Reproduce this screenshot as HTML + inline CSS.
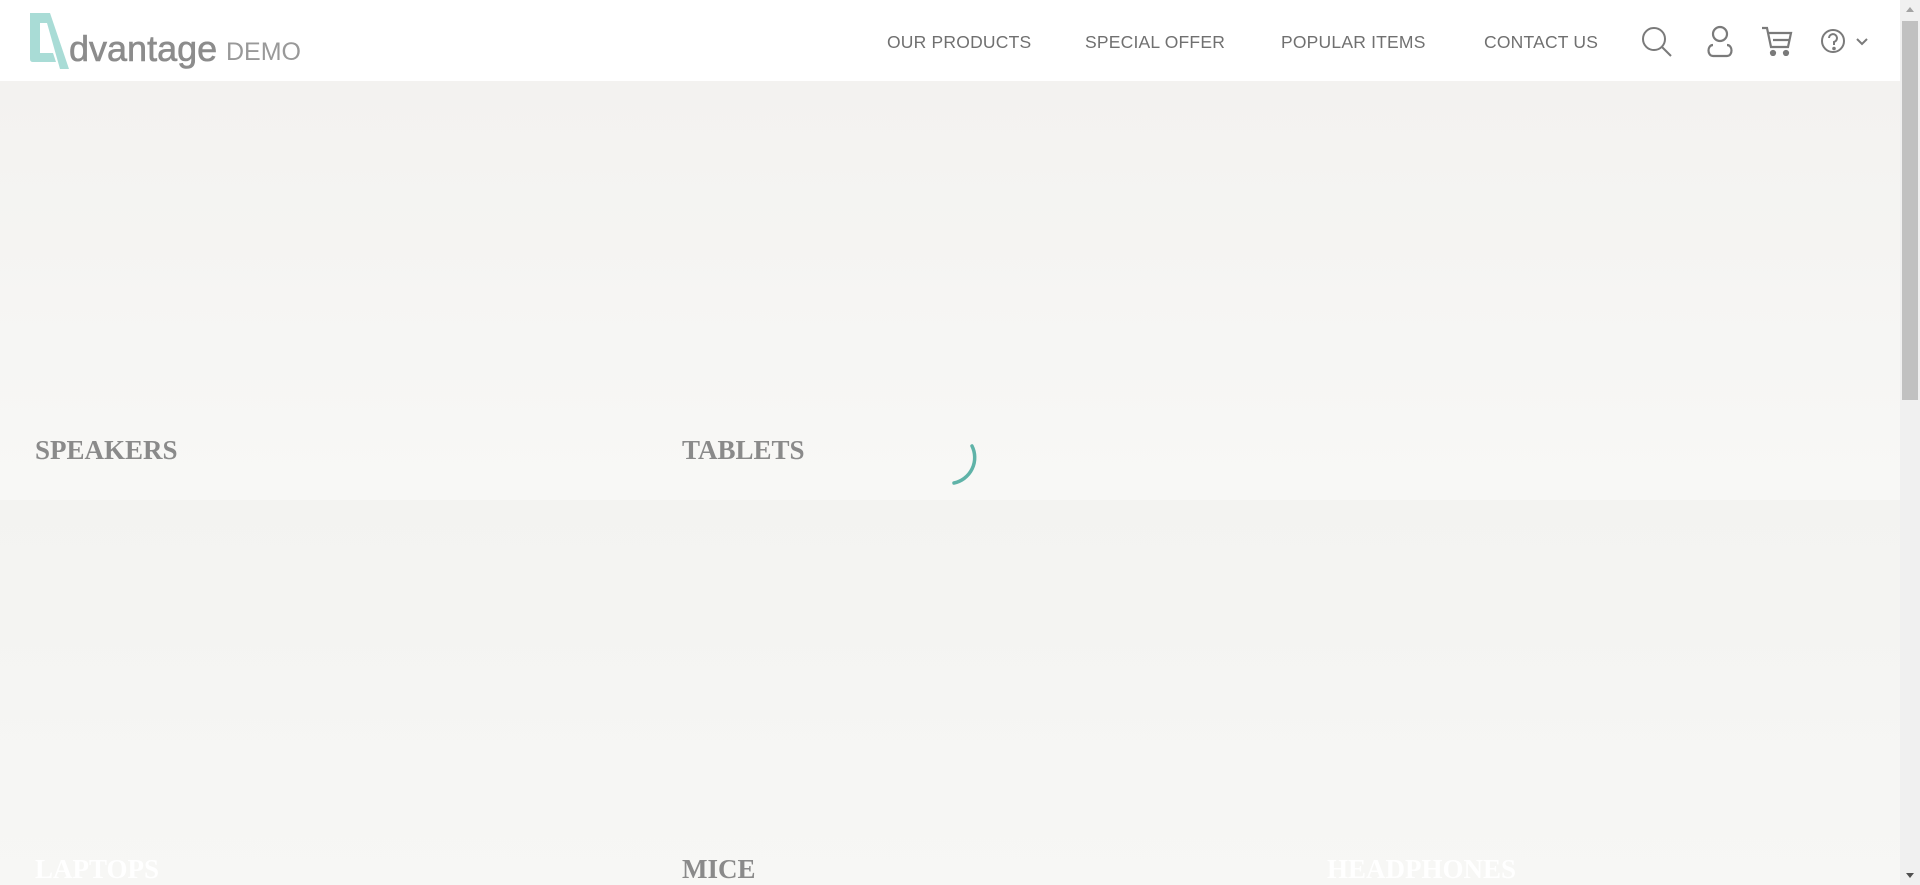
<!DOCTYPE html>
<html><head><meta charset="utf-8"><style>
*{margin:0;padding:0;box-sizing:border-box}
body{width:1920px;height:885px;overflow:hidden;background:#f6f5f3;font-family:"Liberation Sans",sans-serif;position:relative}
header{position:absolute;left:0;top:0;width:1900px;height:81px;background:#fff}
.logo{position:absolute;left:30px;top:13px}
.dv{position:absolute;left:69px;top:28px;font-size:36px;color:#8c8c8c;-webkit-text-stroke:0.6px #8c8c8c}
.demo{position:absolute;left:226px;top:38px;font-size:25px;color:#999}
nav a{position:absolute;top:32px;font-size:17.5px;color:#707070;text-decoration:none;letter-spacing:.2px}
.s1{position:absolute;left:0;top:81px;width:1900px;height:419px;background:linear-gradient(#f3f2f0,#f8f8f6)}
.s2{position:absolute;left:0;top:500px;width:1900px;height:385px;background:linear-gradient(#f3f3f1,#f7f7f5)}
.lab{position:absolute;font-family:"Liberation Serif",serif;font-weight:bold;font-size:27px;color:#8a8a8a}
.sb{position:absolute;left:1900px;top:0;width:20px;height:885px;background:#f0f0f0}
.th{position:absolute;left:2px;top:21px;width:16px;height:379px;background:#c1c1c1}
.ar{position:absolute;left:6px;top:7px;width:0;height:0;border-left:4px solid transparent;border-right:4px solid transparent;border-bottom:5px solid #a3a3a3}
.ar2{position:absolute;left:6px;bottom:7px;width:0;height:0;border-left:4px solid transparent;border-right:4px solid transparent;border-top:5px solid #505050}
</style></head><body>
<header>
<svg class="logo" width="39" height="56" viewBox="0 0 39 56"><path d="M0 0H20L39 56H30L17 10H10V40H23L26 49H3Q0 49 0 46Z" fill="#a9dcd6"/></svg>
<div class="dv">dvantage</div><div class="demo">DEMO</div>
<nav><a style="left:887px">OUR PRODUCTS</a><a style="left:1085px">SPECIAL OFFER</a><a style="left:1281px">POPULAR ITEMS</a><a style="left:1484px">CONTACT US</a></nav>
<svg style="position:absolute;left:1640px;top:25px" width="34" height="34" viewBox="0 0 34 34" fill="none" stroke="#7a7a7a" stroke-width="2"><circle cx="14" cy="14" r="11"/><path d="M22 22l9 9"/></svg>
<svg style="position:absolute;left:1705px;top:25px" width="30" height="34" viewBox="0 0 30 34" fill="none" stroke="#7a7a7a" stroke-width="2.2"><circle cx="15" cy="9" r="7"/><path d="M8 20c-6 0-6 11 0 11h14c6 0 6-11 0-11"/></svg>
<svg style="position:absolute;left:1761px;top:26px" width="34" height="30" viewBox="0 0 34 30" fill="#7a7a7a" stroke="#7a7a7a" stroke-width="2.2"><path fill="none" d="M1 2h5l4 19h17l3-14H8M12 14h16"/><circle cx="12" cy="27" r="2"/><circle cx="25" cy="27" r="2"/></svg>
<svg style="position:absolute;left:1820px;top:28px" width="50" height="26" viewBox="0 0 50 26" fill="none" stroke="#7a7a7a" stroke-width="2"><circle cx="13" cy="13" r="11"/><path d="M9 10a4 4 0 1 1 5 4v3" /><circle cx="14" cy="20.5" r=".8" fill="#7a7a7a"/><path d="M37 11l5 5 5-5"/></svg>
</header>
<div class="s1"></div><div class="s2"></div>
<div class="lab" style="left:35px;top:435px">SPEAKERS</div>
<div class="lab" style="left:682px;top:435px">TABLETS</div>
<div class="lab" style="left:35px;top:854px;color:#fff">LAPTOPS</div>
<div class="lab" style="left:682px;top:854px">MICE</div>
<div class="lab" style="left:1327px;top:854px;color:#fff">HEADPHONES</div>
<svg style="position:absolute;left:928px;top:433px" width="60" height="60" viewBox="0 0 60 60" fill="none"><path d="M44 13a26 26 0 0 1-18 37" stroke="#5fb3a8" stroke-width="3.5" stroke-linecap="round"/></svg>
<div class="sb"><div class="ar"></div><div class="th"></div><div class="ar2"></div></div>
</body></html>
